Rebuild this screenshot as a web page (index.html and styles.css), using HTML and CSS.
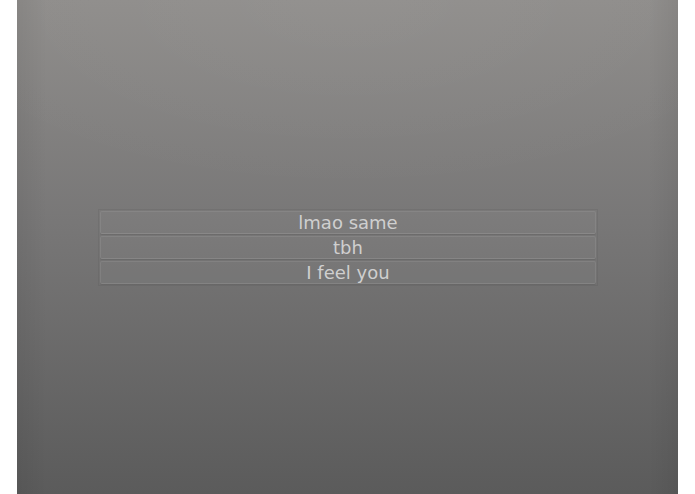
FILE: index.html
```html
<!DOCTYPE html>
<html>
<head>
<meta charset="utf-8">
<link rel="stylesheet" href="styles.css">
</head>
<body>
<div class="screen">
  <div class="menu">
    <div class="item">lmao same</div>
    <div class="item">tbh</div>
    <div class="item">I feel you</div>
  </div>
</div>
</body>
</html>
```
FILE: styles.css
```css
html, body {
  margin: 0;
  padding: 0;
  background: #ffffff;
  height: 100%;
}
body {
  display: flex;
  justify-content: flex-start;
}
.screen {
  margin-left: 17px;
  width: 661px;
  height: 494px;
  background:
    linear-gradient(90deg, rgba(0,0,0,0.06) 0px, rgba(0,0,0,0) 30px, rgba(0,0,0,0) 631px, rgba(0,0,0,0.06) 661px),
    radial-gradient(ellipse 70% 40% at 50% 0%, rgba(255,255,255,0.04), rgba(255,255,255,0)),
    linear-gradient(180deg, #8f8d8b 0%, #787777 45%, #5b5b5b 100%);
  display: flex;
  flex-direction: column;
  align-items: center;
  justify-content: center;
}
.menu {
  width: 496px;
  padding: 1px;
  border: 1px solid rgba(0,0,0,0.05);
  display: flex;
  flex-direction: column;
  gap: 2px;
  margin-left: 1px;
}
.item {
  height: 21px;
  line-height: 21px;
  background: rgba(255,255,255,0.035);
  border: 1px solid rgba(255,255,255,0.07);
  border-bottom-color: rgba(255,255,255,0.1);
  box-shadow: 0 1px 0 rgba(0,0,0,0.08);
  border-radius: 2px;
  text-align: center;
  font-family: "DejaVu Sans", sans-serif;
  font-size: 18px;
  color: #cfcfcf;
}
```
